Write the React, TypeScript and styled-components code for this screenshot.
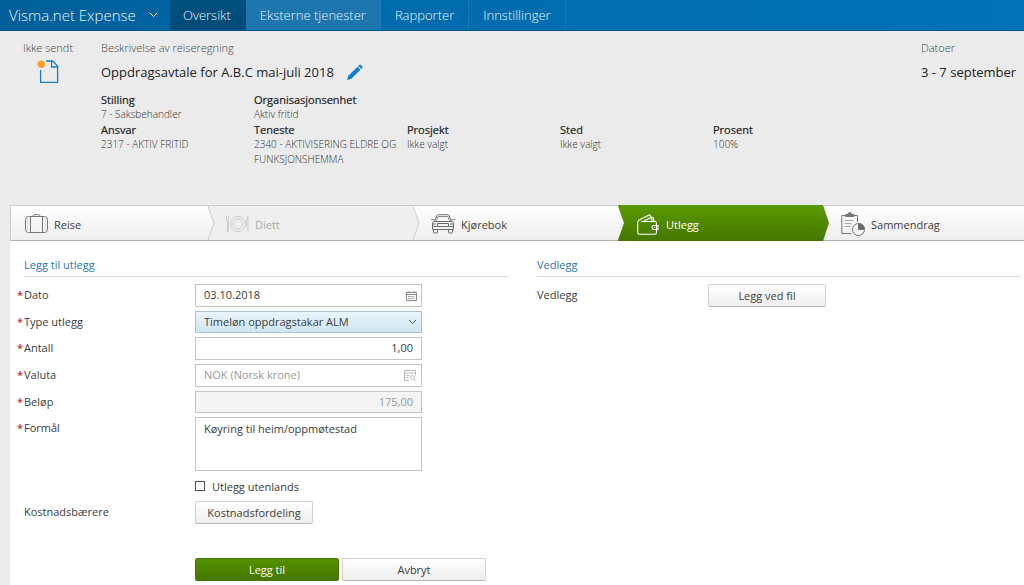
import React from "react";
import styled, { createGlobalStyle, css } from "styled-components";

const GlobalStyle = createGlobalStyle`
  *, *::before, *::after { box-sizing: border-box; }
  body {
    margin: 0;
    background: #ebebeb;
    color: #3c3c3c;
    font-family: "Open Sans", "Noto Sans", sans-serif;
    font-size: 11px;
    line-height: 15px;
    overflow-x: hidden;
  }
  button, input, select, textarea { font: inherit; color: inherit; margin: 0; }
`;

const Page = styled.div`
  display: flex;
  flex-direction: column;
  min-height: 100vh;
`;

const TopBar = styled.nav`
  display: flex;
  height: 31px;
  background: linear-gradient(to right, #005f9a, #006bab 35%, #0072b8);
  border-bottom: 1px solid #00578c;
  color: #e8f2f9;
`;

const Brand = styled.button`
  display: flex;
  align-items: center;
  justify-content: space-between;
  width: 170px;
  padding: 0 12px 0 9px;
  border: 0;
  background: none;
  font-size: 15px;
  font-weight: 300;
`;

const NavLink = styled.a<{ $tone?: "active" | "light" }>`
  display: flex;
  align-items: center;
  padding: 0 14px 0 13px;
  border-right: 1px solid #1b79b5;
  font-size: 13px;
  font-weight: 300;
  color: inherit;
  text-decoration: none;
  &:not(:nth-child(2)) { padding-left: 14px; }
  ${(p) => p.$tone === "active" && css`background: linear-gradient(#00517f, #004a77); border-color: #004a77;`}
  ${(p) => p.$tone === "light" && css`background: #1d76ad;`}
`;

const Header = styled.header`
  display: flex;
  height: 174px;
  padding-top: 9px;
`;

const Status = styled.div`
  display: flex;
  flex-direction: column;
  align-items: center;
  width: 96px;
  gap: 4px;
`;

const Info = styled.div`
  flex: 1;
  padding-left: 5px;
`;

const Dates = styled.div`
  width: 103px;
`;

const Caption = styled.div`
  font-weight: 300;
  color: #444;
`;

const Title = styled.h1`
  display: flex;
  align-items: center;
  gap: 12px;
  height: 20px;
  margin: 7px 0 10px;
  font-size: 13px;
  font-weight: 400;
  color: #222;
  white-space: nowrap;
`;

const Facts = styled.dl`
  display: grid;
  grid-template-columns: repeat(5, 153px);
  margin: 0;
`;

const Fact = styled.div<{ $first?: boolean }>`
  ${(p) => p.$first && css`grid-column-start: 1;`}
`;

const Term = styled.dt`
  color: #222;
  -webkit-text-stroke: 0.2px #222;
`;

const Value = styled.dd`
  margin: 0;
  font-size: 10px;
  font-weight: 300;
  color: #333;
`;

const Content = styled.main`
  flex: 1;
  margin-left: 10px;
  background: #fff;
`;

const Steps = styled.div`
  display: flex;
  height: 36px;
  border: 1px solid #ccc;
  border-width: 1px 0 1px 1px;
  border-bottom-color: #b3b3b3;
  background: linear-gradient(#fff, #eee);
`;

const Step = styled.a<{ $tone?: "active" | "disabled"; $first?: boolean; $last?: boolean }>`
  position: relative;
  display: flex;
  align-items: center;
  gap: 6px;
  flex: ${(p) => (p.$last ? "1" : p.$first ? "0 0 197px" : "0 0 205px")};
  padding: 2px 0 0 ${(p) => (p.$first ? "14px" : "18px")};
  color: #3c3c3c;
  text-decoration: none;
  ${(p) => p.$tone === "disabled" && css`background: #efefef; color: #aaa;`}
  ${(p) => p.$tone === "active" && css`
    margin: -1px 0;
    padding-left: 19px;
    gap: 7px;
    background: linear-gradient(#5a9a00, #457700);
    color: #fff;
  `}
`;

const Chevron = styled.svg`
  position: absolute;
  z-index: 1;
  top: 0;
  left: 100%;
  width: 7px;
  height: 100%;
`;

const Columns = styled.form`
  display: grid;
  grid-template-columns: 1fr 1fr;
  gap: 29px;
  padding: 16px 3px 4px 14px;
`;

const SectionTitle = styled.h2`
  height: 20px;
  margin: 0 0 7px;
  border-bottom: 1px solid #ddd;
  font-size: 11px;
  font-weight: 400;
  line-height: 15px;
  color: #2a76b4;
`;

const Row = styled.div`
  display: grid;
  grid-template-columns: 171px 1fr;
  margin-bottom: 4px;
`;

const Label = styled.label<{ $required?: boolean }>`
  line-height: 22px;
  ${(p) => p.$required && css`
    margin-left: -7px;
    &::before { content: "*"; display: inline-block; width: 7px; color: #c33; font-weight: 600; }
  `}
`;

const Box = styled.div<{ $tone?: "select" | "readonly" | "lookup" }>`
  display: grid;
  align-items: center;
  width: 227px;
  height: ${(p) => (p.$tone === "select" || p.$tone === "readonly" ? "22px" : "23px")};
  border: 1px solid #c4c4c4;
  background: #fff;
  & > * { grid-area: 1 / 1; }
  & > svg { justify-self: end; margin-right: 4px; pointer-events: none; }
  ${(p) => p.$tone === "select" && css`border-color: #a9c3d6; background: linear-gradient(#e9f5fc, #cfe5f2);`}
  ${(p) => p.$tone === "readonly" && css`background: #f4f4f4; color: #999;`}
  ${(p) => p.$tone === "lookup" && css`color: #999;`}
`;

const Input = styled.input<{ $right?: boolean }>`
  width: 100%;
  height: 100%;
  padding: 0 8px 2px;
  border: 0;
  outline: 0;
  background: none;
  text-align: ${(p) => (p.$right ? "right" : "left")};
`;

const Select = styled.select`
  width: 100%;
  height: 100%;
  padding: 0 8px 1px;
  border: 0;
  outline: 0;
  appearance: none;
  background: none;
`;

const TextArea = styled.textarea`
  display: block;
  width: 227px;
  height: 54px;
  padding: 3px 8px;
  border: 1px solid #c4c4c4;
  outline: 0;
  resize: none;
`;

const CheckLabel = styled.label`
  display: flex;
  grid-column: 2;
  align-items: center;
  gap: 7px;
  height: 22px;
`;

const CheckBox = styled.input`
  width: 10px;
  height: 10px;
  border: 1px solid #555;
  appearance: none;
  background: #fff;
  &:checked { background: #457700; }
`;

const Button = styled.button<{ $primary?: boolean; $wide?: boolean }>`
  width: ${(p) => (p.$wide ? "144px" : "118px")};
  height: 23px;
  padding: 0 0 1px;
  border: 1px solid #d2d2d2;
  border-bottom-color: #b5b5b5;
  border-radius: 2px;
  background: linear-gradient(#fff, #eee);
  ${(p) => p.$primary && css`
    border-color: #457700;
    background: linear-gradient(#549100, #457700);
    color: #fff;
  `}
`;

const Actions = styled.div`
  display: flex;
  gap: 3px;
  margin: 34px 0 0 171px;
`;

interface EdgeProps {
  id: string;
  from: string;
  to: string;
  stroke?: string;
}

function StepEdge({ id, from, to, stroke = "none" }: EdgeProps) {
  return (
    <Chevron viewBox="0 0 7 36" preserveAspectRatio="none" aria-hidden="true">
      <defs>
        <linearGradient id={id} x1="0" y1="0" x2="0" y2="1">
          <stop offset="0" stopColor={from} />
          <stop offset="1" stopColor={to} />
        </linearGradient>
      </defs>
      <path d="M0 0 L6 18 L0 36z" fill={`url(#${id})`} />
      <path d="M0 0 L6 18 L0 36" fill="none" stroke={stroke} />
    </Chevron>
  );
}

const DocumentIcon = () => (
  <svg width="22" height="26" viewBox="0 0 22 26" fill="none" stroke="#1d7fc4" strokeWidth="1.3">
    <path d="M3.600 11v12.400h17V7l-5-5H9M14.600 2v6h6" />
    <circle cx="4.300" cy="5.300" r="3.700" fill="#f6a02c" stroke="none" />
  </svg>
);

const PencilIcon = () => (
  <svg width="17" height="17" viewBox="0 0 17 17" fill="#0f80cc">
    <path d="M1 16l1.300-4.300 9.200-9 3 3-9.200 9zM12.200 2l1-1c.6-.5 1.200-.5 1.800 0l1.200 1.200c.5.600.5 1.200 0 1.800l-1 1z" />
  </svg>
);

const SuitcaseIcon = () => (
  <svg width="23" height="20" viewBox="0 0 23 20" fill="none" stroke="#777">
    <rect x=".5" y="2.500" width="22" height="16" rx="3" />
    <path d="M5.500 2.500v16M17.500 2.500v16M8 2.500C8 1 8.800.6 10 .6h3c1.200 0 2 .4 2 1.900" />
    <path d="M2.500 3v15M20.500 3v15" stroke="#ddd" />
  </svg>
);

const PlateIcon = () => (
  <svg width="23" height="18" viewBox="0 0 23 18" fill="none" stroke="#cdcdcd">
    <circle cx="12" cy="9" r="7.500" />
    <circle cx="12" cy="9" r="4.800" />
    <path d="M.5 1v5M2.500 1v16M1.500 6v11M22 17V1c-1.400 1.500-1.700 5-1.500 9H22" />
  </svg>
);

const CarIcon = () => (
  <svg width="24" height="20" viewBox="0 0 24 20" fill="none" stroke="#6a6a6a">
    <path d="M3.500 7.500L5.800 2C6.200 1 6.700.7 7.500.7h9c.8 0 1.300.3 1.700 1.300l2.300 5.500" />
    <path d="M5.500 6.500L7.300 2.500h9.400l1.800 4M0 5.500h3.500M20.500 5.500H24" strokeWidth=".8" />
    <path d="M2.500 7.500h19c.7.700 1 1.500 1 2.500v5.500h-21V10c0-1 .3-1.800 1-2.500z" />
    <path d="M2.500 15.500v2.500c0 .8.300 1 1 1h2c.7 0 1-.2 1-1v-2.500M17.500 15.500v2.500c0 .8.300 1 1 1h2c.7 0 1-.2 1-1v-2.500" />
    <path d="M6.500 9.500h11v3h-11zM1.500 12.500h5M17.500 12.500h5M2 10h3M19 10h3" />
  </svg>
);

const WalletIcon = () => (
  <svg width="22" height="21" viewBox="0 0 22 21" fill="none" stroke="#fff" strokeWidth="1.100">
    <path d="M4 7.500h13.500c1.500 0 2 .5 2 2v9c0 1.200-.5 1.700-1.700 1.700H2.500C1.300 20.200.7 19.700.7 18.500V8.500c0-1.500.8-2.300 2.300-3L12.800.7 15.500 7M7 7l7.500-3.800 1.800.8 1 3.500" />
    <path d="M21 11.500h-4a2 2 0 0 0 0 4h4zM17 13.500h1" />
  </svg>
);

const SummaryIcon = () => (
  <svg width="24" height="24" viewBox="0 0 24 24" fill="none" stroke="#777">
    <path d="M10.500 21.500H.8V3.500h15.700V10" />
    <path d="M4.500 4.500v-2h2.500c0-2.600 3.500-2.600 3.500 0H13v2z" fill="#777" />
    <path d="M3.500 8.500h9M3.500 11.500h7M3.500 14.500h6" stroke="#aaa" />
    <circle cx="17.500" cy="17.500" r="6" fill="#f5f5f5" />
    <path d="M17.500 11.500v6h6a6 6 0 0 0-6-6z" fill="#666" />
  </svg>
);

const CalendarIcon = () => (
  <svg width="11" height="10" viewBox="0 0 11 10" fill="none" stroke="#888">
    <path d="M.5 1.500h10v8H.5zM.5 3.500h10M3 0v2M8 0v2" />
    <path d="M2 5.500h7M2 7.500h7" stroke="#999" strokeDasharray="1.500 .7" />
  </svg>
);

const LookupIcon = () => (
  <svg width="13" height="12" viewBox="0 0 13 12" fill="none" stroke="#bbb">
    <path d="M5 10.500H.5v-10h11v5M.5 3h11M2.500 5.500h3M2.500 7.500h2" />
    <circle cx="8.500" cy="7.500" r="2" />
    <path d="M10 9l2.500 2.500" />
  </svg>
);

const ArrowDown = ({ color }: { color: string }) => (
  <svg width="9" height="6" viewBox="0 0 9 6" fill="none" stroke={color}>
    <path d="M1 1l3.500 3.500L8 1" />
  </svg>
);

export default function App() {
  return (
    <Page>
      <GlobalStyle />
      <TopBar>
        <Brand type="button">
          Visma.net Expense
          <ArrowDown color="#e8f2f9" />
        </Brand>
        <NavLink href="#oversikt" $tone="active">Oversikt</NavLink>
        <NavLink href="#tjenester" $tone="light">Eksterne tjenester</NavLink>
        <NavLink href="#rapporter">Rapporter</NavLink>
        <NavLink href="#innstillinger">Innstillinger</NavLink>
      </TopBar>

      <Header>
        <Status>
          <Caption>Ikke sendt</Caption>
          <DocumentIcon />
        </Status>
        <Info>
          <Caption>Beskrivelse av reiseregning</Caption>
          <Title>
            Oppdragsavtale for A.B.C mai-juli 2018
            <PencilIcon />
          </Title>
          <Facts>
            <Fact><Term>Stilling</Term><Value>7 - Saksbehandler</Value></Fact>
            <Fact><Term>Organisasjonsenhet</Term><Value>Aktiv fritid</Value></Fact>
            <Fact $first><Term>Ansvar</Term><Value>2317 - AKTIV FRITID</Value></Fact>
            <Fact><Term>Teneste</Term><Value>2340 - AKTIVISERING ELDRE OG FUNKSJONSHEMMA</Value></Fact>
            <Fact><Term>Prosjekt</Term><Value>Ikke valgt</Value></Fact>
            <Fact><Term>Sted</Term><Value>Ikke valgt</Value></Fact>
            <Fact><Term>Prosent</Term><Value>100%</Value></Fact>
          </Facts>
        </Info>
        <Dates>
          <Caption>Datoer</Caption>
          <Title as="div">3 - 7 september</Title>
        </Dates>
      </Header>

      <Content>
        <Steps>
          <Step href="#reise" $first>
            <SuitcaseIcon />Reise
            <StepEdge id="edge-reise" from="#fff" to="#eee" stroke="#ccc" />
          </Step>
          <Step href="#diett" $tone="disabled">
            <PlateIcon />Diett
            <StepEdge id="edge-diett" from="#efefef" to="#efefef" stroke="#ccc" />
          </Step>
          <Step href="#kjorebok">
            <CarIcon />Kjørebok
            <StepEdge id="edge-kjorebok" from="#fff" to="#eee" />
          </Step>
          <Step href="#utlegg" $tone="active">
            <WalletIcon />Utlegg
            <StepEdge id="edge-utlegg" from="#5a9a00" to="#457700" />
          </Step>
          <Step href="#sammendrag" $last>
            <SummaryIcon />Sammendrag
          </Step>
        </Steps>

        <Columns onSubmit={(e) => e.preventDefault()}>
          <section>
            <SectionTitle>Legg til utlegg</SectionTitle>
            <Row>
              <Label $required htmlFor="dato">Dato</Label>
              <Box><Input id="dato" defaultValue="03.10.2018" /><CalendarIcon /></Box>
            </Row>
            <Row>
              <Label $required htmlFor="type">Type utlegg</Label>
              <Box $tone="select">
                <Select id="type"><option>Timeløn oppdragstakar ALM</option></Select>
                <ArrowDown color="#555" />
              </Box>
            </Row>
            <Row>
              <Label $required htmlFor="antall">Antall</Label>
              <Box><Input id="antall" $right defaultValue="1,00" /></Box>
            </Row>
            <Row>
              <Label $required htmlFor="valuta">Valuta</Label>
              <Box $tone="lookup"><Input id="valuta" defaultValue="NOK (Norsk krone)" /><LookupIcon /></Box>
            </Row>
            <Row>
              <Label $required htmlFor="belop">Beløp</Label>
              <Box $tone="readonly"><Input id="belop" $right readOnly value="175,00" /></Box>
            </Row>
            <Row>
              <Label $required htmlFor="formal">Formål</Label>
              <TextArea id="formal" defaultValue="Køyring til heim/oppmøtestad" />
            </Row>
            <Row>
              <CheckLabel><CheckBox type="checkbox" />Utlegg utenlands</CheckLabel>
            </Row>
            <Row>
              <Label htmlFor="kostnad">Kostnadsbærere</Label>
              <Button id="kostnad" type="button">Kostnadsfordeling</Button>
            </Row>
            <Actions>
              <Button type="submit" $primary $wide>Legg til</Button>
              <Button type="button" $wide>Avbryt</Button>
            </Actions>
          </section>
          <section>
            <SectionTitle>Vedlegg</SectionTitle>
            <Row>
              <Label htmlFor="vedlegg">Vedlegg</Label>
              <Button id="vedlegg" type="button">Legg ved fil</Button>
            </Row>
          </section>
        </Columns>
      </Content>
    </Page>
  );
}
